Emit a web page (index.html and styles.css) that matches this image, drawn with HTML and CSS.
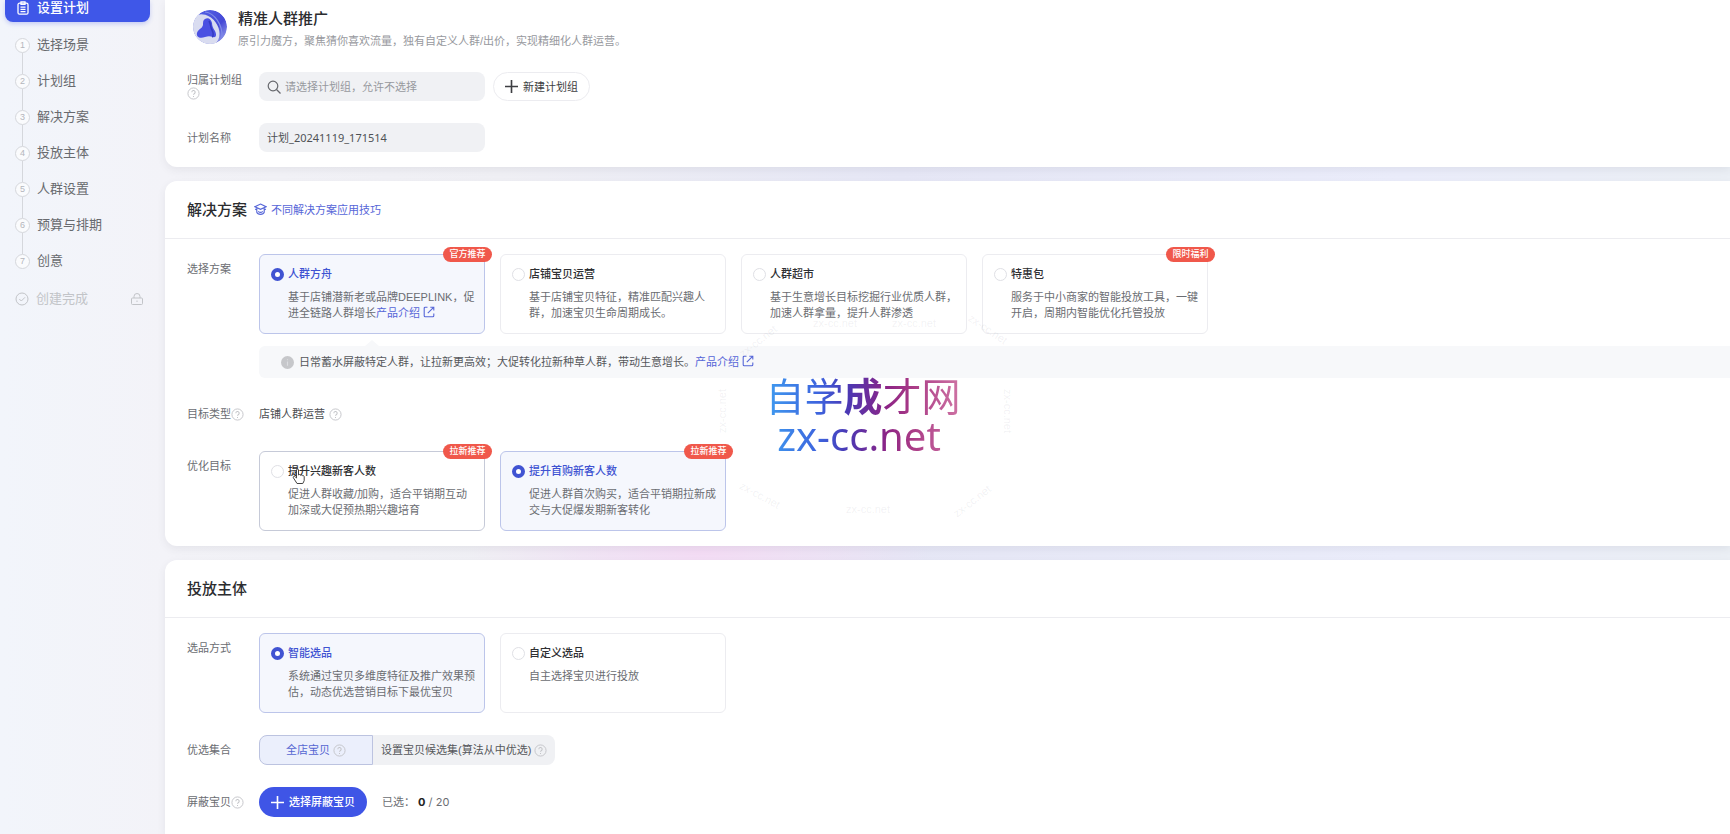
FILE: index.html
```html
<!DOCTYPE html>
<html lang="zh-CN">
<head>
<meta charset="utf-8">
<title>设置计划</title>
<link rel="stylesheet" href="styles.css">
</head>
<body>
<svg class="defs" aria-hidden="true">
  <symbol id="help" viewBox="0 0 14 14"><g fill="none" stroke="currentColor"><circle cx="7" cy="7" r="6"/><path d="M5.2 5.600a1.800 1.800 0 1 1 2.600 1.600c-.6.3-.8.6-.8 1.200M7 9.600v1.100" stroke-width="1.100"/></g></symbol>
  <symbol id="open" viewBox="0 0 12 12"><path d="M4.500 1.200H2.200a1 1 0 0 0-1 1v7.600a1 1 0 0 0 1 1h7.600a1 1 0 0 0 1-1V7.500M7.300 1.200h3.500v3.300M10.600 1.400 4.800 7.200" fill="none" stroke="currentColor" stroke-width="1.100"/></symbol>
  <symbol id="plus" viewBox="0 0 12 12"><path d="M6 0v12M0 6h12" fill="none" stroke="currentColor" stroke-width="1.500"/></symbol>
</svg>

<nav class="sidebar">
  <a class="side-current" href="#plan">
    <svg viewBox="0 0 14 14" width="14" height="14" fill="none" stroke="currentColor" stroke-width="1.300"><rect x="2" y="2.200" width="10" height="11" rx="1.500"/><path d="M5 .8h4v2.600H5zM4.500 6.200h5M4.500 8.400h5M4.500 10.600h5"/></svg>
    设置计划
  </a>
  <ol class="steps">
    <li><a href="#scene"><span class="num">1</span>选择场景</a></li>
    <li><a href="#group"><span class="num">2</span>计划组</a></li>
    <li><a href="#solution"><span class="num">3</span>解决方案</a></li>
    <li><a href="#subject"><span class="num">4</span>投放主体</a></li>
    <li><a href="#crowd"><span class="num">5</span>人群设置</a></li>
    <li><a href="#budget"><span class="num">6</span>预算与排期</a></li>
    <li><a href="#creative"><span class="num">7</span>创意</a></li>
  </ol>
  <div class="done">
    <svg viewBox="0 0 14 14" width="14" height="14" fill="none" stroke="currentColor"><circle cx="7" cy="7" r="6"/><path d="m4.300 7 2 2L10 5.300"/></svg>
    创建完成
    <svg class="lock" viewBox="0 0 14 14" width="14" height="14" fill="none" stroke="currentColor"><rect x="1.500" y="6" width="11" height="6.500" rx="1"/><path d="M4 6V4.500a3 3 0 0 1 6 0V6M7 8.500v1.500"/></svg>
  </div>
</nav>

<main class="main">
  <section class="card card-first" id="plan">
    <header class="intro">
      <svg class="avatar" viewBox="0 0 36 38">
        <defs>
          <linearGradient id="ring" x1="0" y1="0" x2="1" y2="1"><stop offset="0" stop-color="#5565e6"/><stop offset=".6" stop-color="#4549d6"/><stop offset="1" stop-color="#a9b2f0"/></linearGradient>
          <clipPath id="disc"><circle cx="19" cy="19" r="17"/></clipPath>
        </defs>
        <g clip-path="url(#disc)">
          <circle cx="19" cy="19" r="17" fill="url(#ring)"/>
          <path d="M14 4c9 1 18 12 17 26" fill="none" stroke="#7f8be8" stroke-width="1.200"/>
          <ellipse cx="14" cy="22" rx="13" ry="17" transform="rotate(-36 14 22)" fill="#d9dcf0"/>
          <path d="M14 11c3-2 6 0 7 4 0 3 1 5 3 8 2 4 1 7-2 6-3-1-5-1-8 0-5 2-9 0-8-4 1-4 5-4 6-8 0-3 0-5 2-6z" fill="#4a50e2"/>
          <path d="M18 13c2 3 1 6 3 9 2 4 1 7 0 7" fill="none" stroke="#343abf" stroke-width="1.500"/>
        </g>
      </svg>
      <div>
        <h1>精准人群推广</h1>
        <p>原引力魔方，聚焦猜你喜欢流量，独有自定义人群/出价，实现精细化人群运营。</p>
      </div>
    </header>
    <div class="row">
      <label class="name name-wrap" for="plan-group">归属计划组 <svg class="help"><use href="#help"/></svg></label>
      <div class="controls">
        <div class="field">
          <svg class="search" viewBox="0 0 14 14" fill="none" stroke="currentColor" stroke-width="1.200"><circle cx="6" cy="6" r="4.800"/><path d="m9.500 9.500 4 4"/></svg>
          <input id="plan-group" type="text" placeholder="请选择计划组，允许不选择">
        </div>
        <button class="btn btn-plain" type="button"><svg class="plus"><use href="#plus"/></svg>新建计划组</button>
      </div>
    </div>
    <div class="row">
      <label class="name" for="plan-name">计划名称</label>
      <div class="field"><input id="plan-name" type="text" value="计划_20241119_171514"></div>
    </div>
  </section>

  <section class="card" id="solution">
    <header class="head">
      <h2>解决方案</h2>
      <a class="link tips" href="#tips"><svg viewBox="0 0 14 14" width="13" height="13" fill="none" stroke="currentColor" stroke-width="1.200"><path d="M7 1.200 13 4 7 6.800 1 4zM3 5.500v4.500c1 3 7 3 8 0V5.500M1.200 6.500l1.800 1M12.800 6.500l-1.800 1M4.500 9c1.500 1.400 3.500 1.400 5 0"/></svg>不同解决方案应用技巧</a>
    </header>
    <div class="body">
      <div class="row row-top">
        <span class="name">选择方案</span>
        <div class="options">
          <label class="option">
            <input type="radio" name="solution" checked>
            <span class="title">人群方舟</span>
            <span class="desc">基于店铺潜新老或品牌DEEPLINK，促进全链路人群增长<a class="link" href="#ark">产品介绍 <svg class="open"><use href="#open"/></svg></a></span>
            <span class="badge">官方推荐</span>
          </label>
          <label class="option">
            <input type="radio" name="solution">
            <span class="title">店铺宝贝运营</span>
            <span class="desc">基于店铺宝贝特征，精准匹配兴趣人群，加速宝贝生命周期成长。</span>
          </label>
          <label class="option">
            <input type="radio" name="solution">
            <span class="title">人群超市</span>
            <span class="desc">基于生意增长目标挖掘行业优质人群，加速人群拿量，提升人群渗透</span>
          </label>
          <label class="option">
            <input type="radio" name="solution">
            <span class="title">特惠包</span>
            <span class="desc">服务于中小商家的智能投放工具，一键开启，周期内智能优化托管投放</span>
            <span class="badge">限时福利</span>
          </label>
        </div>
      </div>
      <div class="notice">
        <svg class="info" viewBox="0 0 14 14"><circle cx="7" cy="7" r="7" fill="#c6c7ca"/><path d="M7 6v4.500M7 3.500v1.200" stroke="#dcdde0" stroke-width="1.200"/></svg>
        <span>日常蓄水屏蔽特定人群，让拉新更高效；大促转化拉新种草人群，带动生意增长。<a class="link" href="#ark">产品介绍 <svg class="open"><use href="#open"/></svg></a></span>
      </div>
      <div class="row row-type">
        <span class="name">目标类型<svg class="help"><use href="#help"/></svg></span>
        <span class="value">店铺人群运营 <svg class="help"><use href="#help"/></svg></span>
      </div>
      <div class="row row-top row-goal">
        <span class="name">优化目标</span>
        <div class="options">
          <label class="option option-hover">
            <input type="radio" name="goal">
            <span class="title">提升兴趣新客人数</span>
            <span class="desc">促进人群收藏/加购，适合平销期互动加深或大促预热期兴趣培育</span>
            <span class="badge">拉新推荐</span>
            <svg class="cursor" viewBox="0 0 14 17"><path d="M5 15.500 1.500 10c-1-1.500.8-2.200 1.800-1L4.500 10V2c0-1.300 2-1.300 2 0v5c.6-.8 1.800-.6 2 .3.600-.6 1.700-.4 1.900.4.700-.4 1.800 0 1.800 1v4l-1.400 2.800z" fill="#fff" stroke="#444"/></svg>
          </label>
          <label class="option">
            <input type="radio" name="goal" checked>
            <span class="title">提升首购新客人数</span>
            <span class="desc">促进人群首次购买，适合平销期拉新成交与大促爆发期新客转化</span>
            <span class="badge">拉新推荐</span>
          </label>
        </div>
      </div>
    </div>
  </section>

  <section class="card" id="subject">
    <header class="head"><h2>投放主体</h2></header>
    <div class="body">
      <div class="row row-top">
        <span class="name">选品方式</span>
        <div class="options">
          <label class="option">
            <input type="radio" name="pick" checked>
            <span class="title">智能选品</span>
            <span class="desc">系统通过宝贝多维度特征及推广效果预估，动态优选营销目标下最优宝贝</span>
          </label>
          <label class="option">
            <input type="radio" name="pick">
            <span class="title">自定义选品</span>
            <span class="desc">自主选择宝贝进行投放</span>
          </label>
        </div>
      </div>
      <div class="row">
        <span class="name">优选集合</span>
        <div class="segments">
          <button class="segment segment-on" type="button">全店宝贝<svg class="help"><use href="#help"/></svg></button>
          <button class="segment" type="button">设置宝贝候选集(算法从中优选)<svg class="help"><use href="#help"/></svg></button>
        </div>
      </div>
      <div class="row">
        <span class="name">屏蔽宝贝<svg class="help"><use href="#help"/></svg></span>
        <div class="controls controls-wide">
          <button class="btn btn-primary" type="button"><svg class="plus"><use href="#plus"/></svg>选择屏蔽宝贝</button>
          <span class="count">已选： <b>0</b> / 20</span>
        </div>
      </div>
    </div>
  </section>
</main>

<div class="mark" aria-hidden="true">
  <div class="mark-title">自学<span class="mark-bold">成</span>才网</div>
  <div class="mark-site">zx-cc.net</div>
  <span class="ghost g1">zx-cc.net</span>
  <span class="ghost g2">zx-cc.net</span>
  <span class="ghost g3">zx-cc.net</span>
  <span class="ghost g4">zx-cc.net</span>
  <span class="ghost g5">zx-cc.net</span>
  <span class="ghost g6">zx-cc.net</span>
  <span class="ghost g7">zx-cc.net</span>
  <span class="ghost g8">zx-cc.net</span>
  <span class="ghost g9">zx-cc.net</span>
</div>
</body>
</html>
```

FILE: styles.css
```css
:root {
  --blue: #3f55e6;
  --text: #333437;
  --muted: #6b6d72;
  --line: #ececf0;
  --digits: "Noto Sans", "Noto Sans CJK SC", sans-serif;
}

* { box-sizing: border-box; }

body {
  margin: 0;
  display: flex;
  height: 100vh;
  overflow: hidden;
  position: relative;
  font: 11px/18px "Liberation Sans", "Noto Sans CJK SC", sans-serif;
  color: var(--text);
  background:
    radial-gradient(ellipse 230px 60px at 700px 553px, #f4dcf5, transparent),
    linear-gradient(90deg, #f2f5fb 0, #f3f3f8 165px, #f0f0f5 500px, #e6e7f6 900px, #ebedfb 1400px, #ebeff5 100%);
}

h1, h2, p, ol { margin: 0; padding: 0; }
h1, h2 { font-size: 15px; line-height: 22px; font-weight: 500; color: #2b2c2f; }
button, input { font: inherit; color: inherit; }
a { color: inherit; text-decoration: none; }
.defs { position: absolute; width: 0; height: 0; }
.link { color: #5666d8; }

.help { width: 13px; height: 13px; color: #c3c4c8; vertical-align: -3px; flex: none; }
.open { width: 12px; height: 12px; vertical-align: -1px; }
.plus { width: 13px; height: 13px; flex: none; }

/* Sidebar */
.sidebar {
  width: 150px;
  padding-left: 5px;
  flex: none;
  font-size: 13px;
  color: #686a6e;
}
.side-current {
  display: flex;
  align-items: flex-end;
  gap: 7px;
  height: 22px;
  padding: 0 0 5px 11px;
  border-radius: 0 0 8px 8px;
  background: #3f57e8;
  color: #fff;
  font-weight: 500;
  box-shadow: 0 2px 4px rgba(63, 87, 232, .25);
}
.side-current svg { margin-bottom: 2px; }
.steps { list-style: none; padding-top: 5px; }
.steps a, .done {
  display: flex;
  align-items: center;
  gap: 7px;
  height: 36px;
  padding-left: 10px;
}
.num {
  width: 15px;
  height: 15px;
  border: 1px solid #d5d7dc;
  border-radius: 50%;
  background: #fafbfd;
  color: #b4b6bc;
  font-size: 9px;
  line-height: 13px;
  text-align: center;
}
.steps li + li .num::before {
  content: "";
  display: block;
  position: absolute;
  width: 1px;
  height: 21px;
  margin: -22px 0 0 6px;
  background: #d5d7dc;
}
.done { color: #c2c4c8; margin-top: 2px; padding-right: 6px; }
.lock { margin-left: auto; }

/* Cards */
.main {
  flex: 1;
  min-width: 0;
  margin-left: 15px;
  display: flex;
  flex-direction: column;
  gap: 14px;
}
.card {
  flex: none;
  background: #fff;
  border-radius: 12px 0 0 12px;
  box-shadow: 0 3px 8px rgba(60, 62, 80, .08);
}
.card:last-child { flex: 1 0 auto; border-radius: 12px 0 0 0; }
.card-first {
  display: flex;
  flex-direction: column;
  gap: 22px;
  padding: 8px 22px 15px;
  border-radius: 0 0 0 12px;
}
.intro { display: flex; gap: 11px; padding-left: 4px; }
.intro p { color: #97999e; margin-top: 2px; }
.avatar { width: 36px; height: 38px; }

.head {
  display: flex;
  align-items: center;
  gap: 7px;
  height: 58px;
  padding: 0 22px;
  border-bottom: 1px solid var(--line);
}
.tips { display: flex; align-items: center; gap: 4px; }
.body { padding: 15px 0 15px 22px; }
.body > .row + .row { margin-top: 22px; }

/* Form rows */
.row { display: grid; grid-template-columns: 72px 1fr; align-items: center; }
.row-top { align-items: start; }
.row-top .name { padding-top: 6px; }
.name { color: var(--muted); white-space: nowrap; }
.name-wrap { white-space: normal; line-height: 14px; }
.name-wrap .help { display: block; }
.row-type { margin-top: 27px; }
.body > .row-goal.row-top { margin-top: 28px; }
.controls { display: flex; align-items: center; gap: 8px; }
.controls-wide { gap: 15px; }

.field {
  display: flex;
  align-items: center;
  gap: 4px;
  width: 226px;
  height: 29px;
  padding: 0 8px;
  border-radius: 8px;
  background: #f0f1f4;
}
.field input { flex: 1; min-width: 0; padding: 0; border: 0; outline: 0; background: none; color: #4f5155; font-family: var(--digits); }
.field input::placeholder { color: #97999e; opacity: 1; }
.search { width: 14px; height: 14px; color: #66686d; }

.btn {
  display: flex;
  align-items: center;
  gap: 5px;
  height: 30px;
  padding: 0 12px;
  border-radius: 15px;
}
.btn-plain { height: 29px; padding: 0 11px; border: 1px solid var(--line); background: #fff; color: #3d3e42; }
.btn-primary { border: 0; background: var(--blue); color: #fff; font-weight: 500; }
.count { color: var(--muted); white-space: pre; font-family: Inter, "Noto Sans CJK SC", sans-serif; }
.count b { color: #222; }

/* Option cards */
.options { display: flex; flex-wrap: wrap; gap: 15px; }
.option {
  position: relative;
  display: grid;
  grid-template-columns: 13px 1fr;
  column-gap: 4px;
  align-content: start;
  align-items: center;
  width: 226px;
  min-height: 80px;
  padding: 10px 8px 10px 11px;
  border: 1px solid var(--line);
  border-radius: 6px;
}
.option input {
  appearance: none;
  width: 13px;
  height: 13px;
  margin: 0;
  border: 1px solid #dfe0e5;
  border-radius: 50%;
  background: #fff;
}
.option input:checked { border: 4px solid #4053d2; }
.option:has(:checked) { border-color: #bcc5ea; background: #f5f7fd; }
.option-hover { border-color: #c6cad8; }
.title { color: #2f3033; font-weight: 500; }
.option:has(:checked) .title { color: #4053d2; }
.desc { grid-column: 2; margin-top: 6px; line-height: 16px; color: var(--muted); }
.badge {
  position: absolute;
  top: -8px;
  right: -8px;
  width: 49px;
  height: 15px;
  border-radius: 8px;
  background: #f0584b;
  color: #fff;
  font-size: 9px;
  font-weight: 500;
  line-height: 15px;
  text-align: center;
}
.cursor { position: absolute; left: 32px; top: 16px; width: 14px; height: 17px; }

.notice {
  position: relative;
  display: flex;
  align-items: center;
  gap: 5px;
  margin: 12px 0 0 72px;
  padding: 7px 22px;
  border-radius: 6px 0 0 6px;
  background: #f7f8fa;
  color: #55575b;
}
.notice::before {
  content: "";
  position: absolute;
  left: 106px;
  top: -6px;
  border: 7px solid transparent;
  border-top: 0;
  border-bottom: 6px solid #f7f8fa;
}
.info { width: 13px; height: 13px; }
.value { color: #4b4d51; }
.value .help { margin-left: 1px; }

.segments { display: flex; }
.segment {
  display: flex;
  align-items: center;
  justify-content: center;
  gap: 3px;
  height: 30px;
  padding: 0 8px;
  border: 0;
  border-radius: 0 8px 8px 0;
  background: #f0f1f4;
  color: #55575b;
}
.segment-on {
  width: 114px;
  border: 1px solid #bcc3e0;
  border-radius: 8px 0 0 8px;
  background: #ebeffc;
  color: #5566d2;
}

/* Overlay mark */
.mark {
  position: absolute;
  left: 711px;
  top: 298px;
  width: 300px;
  height: 230px;
  padding-top: 74px;
  text-align: center;
  pointer-events: none;
}
.mark-title, .mark-site {
  width: 196px;
  margin-left: 54px;
  background: linear-gradient(90deg, #3f9df0 0, #3d62dd 28%, #4a38b4 42%, #8c2486 62%, #a93a86 75%, #cf74a4 100%);
  background-clip: text;
  color: transparent;
  white-space: nowrap;
}
.mark-title { font: 39px/44px "Noto Sans CJK SC", sans-serif; }
.mark-bold { font-weight: 700; }
.mark-site { font: 40px/40px "Noto Sans", sans-serif; padding-right: 8px; }
.ghost {
  position: absolute;
  width: 50px;
  font-size: 11px;
  line-height: 14px;
  color: rgba(120, 122, 140, .1);
}
.g1 { left: 22px; top: 36px; transform: rotate(-38deg); }
.g2 { left: 99px; top: 18px; }
.g3 { left: 178px; top: 18px; }
.g4 { left: 252px; top: 24px; transform: rotate(34deg); }
.g5 { left: 272px; top: 106px; transform: rotate(90deg); }
.g6 { left: 236px; top: 196px; transform: rotate(-38deg); }
.g7 { left: 132px; top: 204px; }
.g8 { left: 24px; top: 190px; transform: rotate(28deg); }
.g9 { left: -14px; top: 106px; transform: rotate(-90deg); }
```
